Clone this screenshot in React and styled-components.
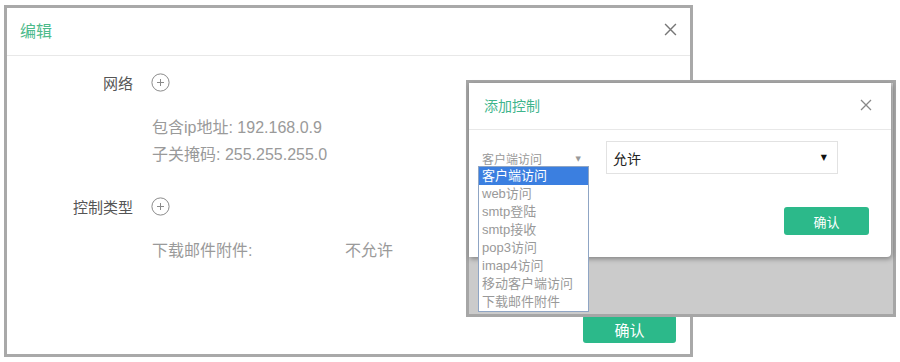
import React from 'react';
import styled, { createGlobalStyle } from 'styled-components';

const green = '#2cb98a';
const font = '"Liberation Sans", "Noto Sans CJK SC", sans-serif';

const GlobalStyle = createGlobalStyle`
  html, body {
    margin: 0;
    padding: 0;
    background: #fff;
  }
  body {
    font-family: ${font};
  }
  * {
    box-sizing: border-box;
  }
`;

const controlTypes = [
  '客户端访问',
  'web访问',
  'smtp登陆',
  'smtp接收',
  'pop3访问',
  'imap4访问',
  '移动客户端访问',
  '下载邮件附件',
];

const CloseIcon = ({ size = 12, color = '#777' }) => (
  <svg width={size} height={size} viewBox="0 0 12 12">
    <path d="M1 1 L11 11 M11 1 L1 11" stroke={color} strokeWidth="1.3" fill="none" />
  </svg>
);

const PlusIcon = () => (
  <svg width="19" height="19" viewBox="0 0 19 19">
    <circle cx="9.5" cy="9.5" r="8.6" stroke="#8a8a8a" strokeWidth="1" fill="none" />
    <path d="M9.5 6 V13 M6 9.5 H13" stroke="#8a8a8a" strokeWidth="1" />
  </svg>
);

export default function App() {
  return (
    <Canvas>
      <GlobalStyle />

      <MainShot>
        <Header>
          <Title>编辑</Title>
          <CloseIcon size={13} />
        </Header>

        <Body>
          <FieldRow $top={12}>
            <Label>网络</Label>
            <PlusIcon />
          </FieldRow>
          <Details $top={18}>
            <Line>包含ip地址: 192.168.0.9</Line>
            <Line>子关掩码: 255.255.255.0</Line>
          </Details>

          <FieldRow $top={24}>
            <Label>控制类型</Label>
            <PlusIcon />
          </FieldRow>
          <Details $top={17}>
            <KeyValue>
              <span>下载邮件附件:</span>
              <span>不允许</span>
            </KeyValue>
          </Details>
        </Body>

        <Footer>
          <Button $w={93} $h={28} $size={15}>确认</Button>
        </Footer>
      </MainShot>

      <InsetShot>
        <Modal>
          <ModalHeader>
            <ModalTitle>添加控制</ModalTitle>
            <CloseIcon size={12} color="#888" />
          </ModalHeader>
          <ModalBody>
            <SelectRow>
              <NativeSelect>
                <span>客户端访问</span>
                <Arrow $color="#999" $size={7}>▼</Arrow>
                <OptionList>
                  {controlTypes.map((t, i) => (
                    <OptionItem key={t} $active={i === 0}>{t}</OptionItem>
                  ))}
                </OptionList>
              </NativeSelect>
              <BoxSelect>
                <span>允许</span>
                <Arrow $color="#111" $size={8}>▼</Arrow>
              </BoxSelect>
            </SelectRow>
            <ModalFooter>
              <Button $w={85} $h={28} $size={13}>确认</Button>
            </ModalFooter>
          </ModalBody>
        </Modal>
      </InsetShot>
    </Canvas>
  );
}

const Canvas = styled.div`
  position: relative;
  width: 900px;
  height: 362px;
  padding: 5px 0 0 4px;
  background: #fff;
  font-family: ${font};
  overflow: hidden;
`;

const MainShot = styled.div`
  width: 689px;
  height: 352px;
  border: 3px solid #a9a9a9;
  background: #fff;
  display: flex;
  flex-direction: column;
`;

const Header = styled.div`
  height: 48px;
  flex: none;
  display: flex;
  align-items: center;
  justify-content: space-between;
  padding: 0 13px 4px 13px;
  border-bottom: 1px solid #e8e8e8;
`;

const Title = styled.div`
  font-size: 16px;
  color: #4dba8b;
`;

const Body = styled.div`
  flex: 1;
  display: flex;
  flex-direction: column;
`;

const FieldRow = styled.div`
  display: flex;
  align-items: center;
  height: 28px;
  margin-top: ${p => p.$top}px;
  gap: 18px;
`;

const Label = styled.div`
  width: 126px;
  text-align: right;
  font-size: 15px;
  color: #555;
`;

const Details = styled.div`
  margin-top: ${p => p.$top}px;
  padding-left: 145px;
  font-size: 16px;
  color: #9a9a9a;
`;

const Line = styled.div`
  line-height: 27px;
`;

const KeyValue = styled(Line)`
  display: grid;
  grid-template-columns: 193px auto;
`;

const Footer = styled.div`
  display: flex;
  justify-content: flex-end;
  padding: 0 14px 11px 0;
`;

const Button = styled.div`
  width: ${p => p.$w}px;
  height: ${p => p.$h}px;
  border-radius: 3px;
  background: ${green};
  color: #fff;
  font-size: ${p => p.$size}px;
  display: flex;
  align-items: center;
  justify-content: center;
`;

const InsetShot = styled.div`
  position: absolute;
  left: 466px;
  top: 80px;
  width: 430px;
  height: 237px;
  border: 3px solid #a6a6a6;
  background: #cbcbcb;
  padding-right: 2px;
`;

const Modal = styled.div`
  height: 174px;
  background: #fff;
  border-radius: 0 0 4px 0;
  box-shadow: 1px 2px 5px rgba(0, 0, 0, 0.35);
  display: flex;
  flex-direction: column;
`;

const ModalHeader = styled.div`
  height: 47px;
  flex: none;
  display: flex;
  align-items: center;
  justify-content: space-between;
  padding: 0 19px 3px 15px;
  border-bottom: 1px solid #e8e8e8;
`;

const ModalTitle = styled.div`
  font-size: 14px;
  color: #3fb58c;
`;

const ModalBody = styled.div`
  flex: 1;
  padding: 11px 22px 0 9px;
  display: flex;
  flex-direction: column;
`;

const SelectRow = styled.div`
  display: flex;
  gap: 17px;
  align-items: flex-start;
`;

const NativeSelect = styled.div`
  position: relative;
  width: 111px;
  height: 25px;
  margin-top: 5px;
  display: flex;
  align-items: center;
  justify-content: space-between;
  padding: 0 8px 0 4px;
  font-size: 12px;
  color: #999;
`;

const Arrow = styled.span`
  font-size: ${p => p.$size}px;
  color: ${p => p.$color};
  font-family: "DejaVu Sans", sans-serif;
`;

const OptionList = styled.div`
  position: absolute;
  left: 0;
  top: 20px;
  width: 111px;
  border: 1px solid #8fa5c4;
  background: #fff;
  z-index: 2;
`;

const OptionItem = styled.div`
  height: 18px;
  line-height: 18px;
  padding-left: 3px;
  font-size: 13px;
  font-family: ${font};
  color: ${p => (p.$active ? '#fff' : '#999')};
  background: ${p => (p.$active ? '#3b7fe0' : 'transparent')};
`;

const BoxSelect = styled.div`
  width: 232px;
  height: 33px;
  border: 1px solid #e2e2e2;
  display: flex;
  align-items: center;
  justify-content: space-between;
  padding: 0 10px 0 6px;
  font-size: 14px;
  color: #222;
`;

const ModalFooter = styled.div`
  display: flex;
  justify-content: flex-end;
  margin-top: 33px;
`;
